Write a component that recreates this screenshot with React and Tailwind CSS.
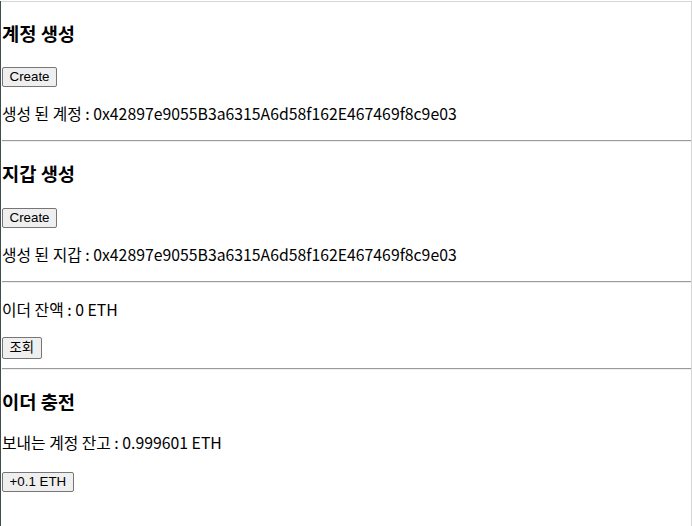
import React from 'react';

const body = { fontFamily: '"Noto Sans CJK KR", "Liberation Sans", sans-serif' };
const btnFont = { fontFamily: '"Liberation Sans", "Noto Sans CJK KR", sans-serif' };

const Btn = ({ children, className = '' }) => (
  <button
    style={btnFont}
    className={`block bg-[#efefef] border border-[#767676] rounded-[2px] px-[6.5px] text-[13.333px] text-black leading-none ${className}`}
  >
    {children}
  </button>
);

const Rule = ({ className = '' }) => (
  <div className={`h-[2px] border-t border-[#9a9a9a] border-b border-b-[#eeeeee] ${className}`} />
);

export default function App() {
  return (
    <div className="h-[526px] bg-white border-l border-[#3f4d52] text-black" style={body}>
      <div className="h-full mt-px border-t border-r border-[#d6d6d6] pl-px">
        {/* 계정 생성 */}
        <h3 className="mt-[19px] h-6 leading-6 text-[18.72px] font-bold">계정 생성</h3>
        <Btn className="mt-[22px] h-[20px]">Create</Btn>
        <p className="mt-[17px] h-5 leading-5 text-[15.8px]">
          생성 된 계정 : 0x42897e9055B3a6315A6d58f162E467469f8c9e03
        </p>
        <Rule className="mt-[16px]" />

        {/* 지갑 생성 */}
        <h3 className="mt-[19px] h-6 leading-6 text-[18.72px] font-bold">지갑 생성</h3>
        <Btn className="mt-[23px] h-[20px]">Create</Btn>
        <p className="mt-[17px] h-5 leading-5 text-[15.8px]">
          생성 된 지갑 : 0x42897e9055B3a6315A6d58f162E467469f8c9e03
        </p>
        <Rule className="mt-[16px]" />

        {/* 이더 잔액 */}
        <p className="mt-[17px] h-5 leading-5 text-[15.8px]">이더 잔액 : 0 ETH</p>
        <Btn className="mt-[17px] h-[22px]">조회</Btn>
        <Rule className="mt-[9px]" />

        {/* 이더 충전 */}
        <h3 className="mt-[19px] h-6 leading-6 text-[18.72px] font-bold">이더 충전</h3>
        <p className="mt-[20px] h-5 leading-5 text-[15.8px]">보내는 계정 잔고 : 0.999601 ETH</p>
        <Btn className="mt-[19px] h-[20px]">+0.1 ETH</Btn>
      </div>
    </div>
  );
}
